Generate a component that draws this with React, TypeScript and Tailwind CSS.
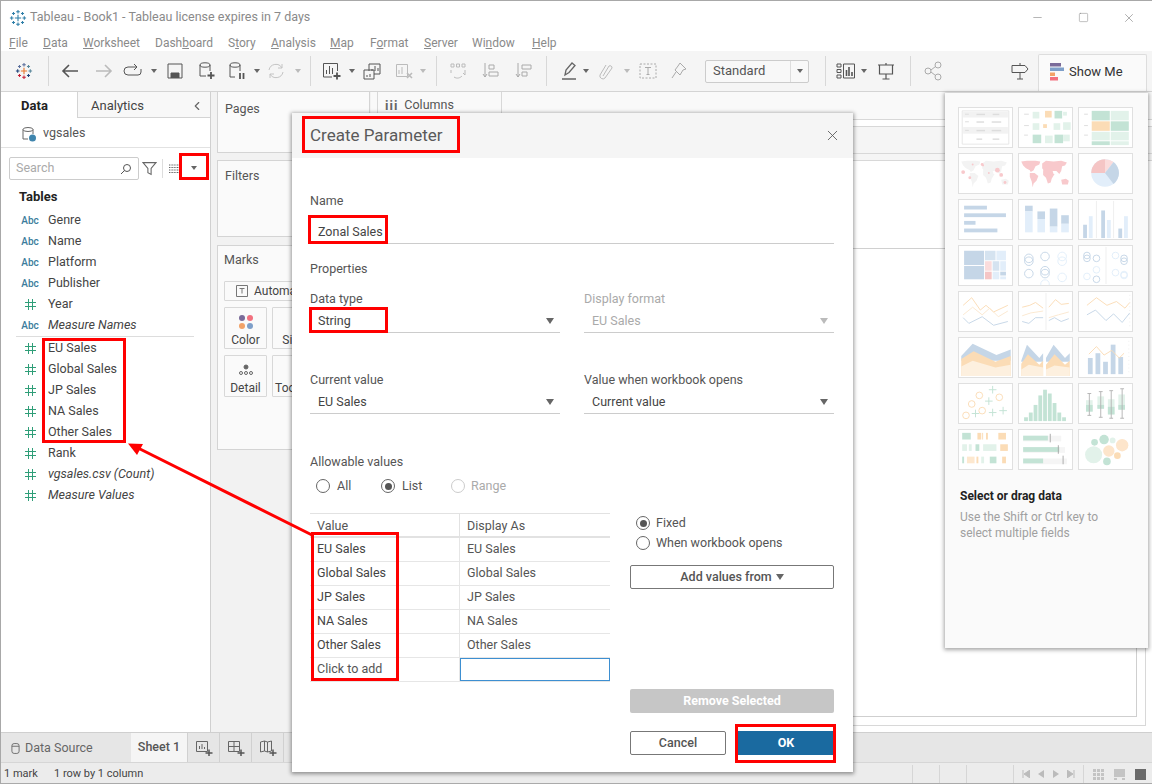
import type { ReactNode } from 'react';
import { X, Minus, Square, ChevronLeft } from 'lucide-react';

const B = '#c5d6e7';
const LB = '#e2eefa';
const O = '#fbdcb6';
const G = '#c3e3d5';
const LG = '#e2f2ea';
const P = '#f8c9cc';

function Ic({ children, className = '' }: { children: ReactNode; className?: string }) {
  return (
    <svg viewBox="0 0 20 20" fill="none" stroke="currentColor" className={`h-5 w-5 shrink-0 ${className}`}>
      {children}
    </svg>
  );
}

function Caret({ className = '' }: { className?: string }) {
  return <span className={`h-0 w-0 shrink-0 border-x-[3px] border-t-[4px] border-x-transparent border-t-[#666] ${className}`} />;
}

function GrayCaret({ className = '' }: { className?: string }) {
  return <span className={`h-0 w-0 shrink-0 border-x-[3px] border-t-[4px] border-x-transparent border-t-[#bbb] ${className}`} />;
}

function BigCaret({ disabled }: { disabled?: boolean }) {
  return <span className={`h-0 w-0 shrink-0 border-x-[4px] border-t-[6px] border-x-transparent ${disabled ? 'border-t-[#bbb]' : 'border-t-[#666]'}`} />;
}

function Sep({ className = '' }: { className?: string }) {
  return <span className={`h-[30px] w-px shrink-0 bg-[#d8d8d8] ${className}`} />;
}

function Logo({ mono = false }: { mono?: boolean }) {
  const c = mono ? ['#2f7fa8', '#2f7fa8', '#2f7fa8', '#2f7fa8', '#2f7fa8'] : ['#e8762b', '#5b6f9c', '#c72037', '#1f447a', '#59879b'];
  const plus = (x: number, y: number, r: number, col: string, k: string) => (
    <path key={k} d={`M${x - r} ${y}H${x + r}M${x} ${y - r}V${y + r}`} stroke={col} strokeWidth="1.2" />
  );
  return (
    <svg viewBox="0 0 20 20" className="h-[18px] w-[18px]" fill="none">
      {plus(10, 10, 3.5, c[0], 'a')}
      {plus(10, 3, 2, c[1], 'b')}
      {plus(10, 17, 2, c[2], 'c')}
      {plus(3, 10, 2, c[3], 'd')}
      {plus(17, 10, 2, c[4], 'e')}
      {plus(5, 5, 1.7, c[1], 'f')}
      {plus(15, 5, 1.7, c[4], 'g')}
      {plus(5, 15, 1.7, c[2], 'h')}
      {plus(15, 15, 1.7, c[3], 'i')}
    </svg>
  );
}

function Toolbar() {
  return (
    <div className="flex h-[41px] shrink-0 items-center border-b border-[#d4d4d4] bg-[#f5f5f5]">
      <div className="ml-[14px] flex w-5 justify-center"><Logo /></div>
      <Sep className="ml-[14px]" />
      <Ic className="ml-[11px] text-[#555]"><path d="M18 10H3M9 4l-6 6 6 6" strokeWidth="1.6" /></Ic>
      <Ic className="ml-[14px] text-[#bbb]"><path d="M2 10h15M11 4l6 6-6 6" strokeWidth="1.6" /></Ic>
      <Ic className="ml-[9px] text-[#555]"><path d="M13 6H5a3 3 0 0 0 0 8h10a3 3 0 0 0 3-3V8M11 3l3 3-3 3" /></Ic>
      <Caret className="ml-2" />
      <Ic className="ml-2 text-[#555]"><path d="M3 3h14v14H3z" /><path d="M6 17v-5h8v5" fill="currentColor" /></Ic>
      <Ic className="ml-[11px] text-[#555]"><ellipse cx="9" cy="4" rx="5" ry="2.2" /><path d="M4 4v11h6M14 4v6" /><path d="M15 11v7M11.5 14.5h7" strokeWidth="1.8" /></Ic>
      <Ic className="ml-[11px] text-[#555]"><ellipse cx="8" cy="4" rx="5" ry="2.2" /><path d="M3 4v12h5M13 4v6" /><path d="M13 12v6M16.5 12v6" strokeWidth="1.8" /></Ic>
      <Caret className="ml-[7px]" />
      <Ic className="ml-1.5 text-[#c4c4c4]"><path d="M3 9a7 7 0 0 1 13-2M17 11a7 7 0 0 1-13 2M16 3v4h-4M4 17v-4h4" /></Ic>
      <GrayCaret className="ml-[9px]" />
      <Sep className="ml-[9px]" />
      <Ic className="ml-[11px] text-[#555]"><path d="M10 16H1.500V2.500h14V10M4.500 13V9M7.500 13V5M10.500 13V7" /><path d="M15 11.500v7M11.500 15h7" strokeWidth="1.8" /></Ic>
      <Caret className="ml-[7px]" />
      <Ic className="ml-[7px] text-[#555]"><path d="M7 10V3h11v10h-6M10 10V8M13 10V5M16 10V7" /><path d="M2 9h10v9H2zM5 16v-2M8 16v-3" /></Ic>
      <Ic className="ml-3 text-[#bbb]"><path d="M2.500 3.500h11v12h-11zM5 13V9M8 13V6" /><path d="M13 12l5 5M18 12l-5 5" strokeWidth="1.6" /></Ic>
      <GrayCaret className="ml-1.5" />
      <Sep className="ml-2.5" />
      <Ic className="ml-[11px] text-[#bbb]"><path d="M3 3h3v3H3zM8.500 3h3v3h-3zM14 3h3v3h-3zM3 9v3M17 9v5l-2-2M6 16c3 2 6 1 8-1" /></Ic>
      <Ic className="ml-3 text-[#aaa]"><path d="M5 2v14M3 13l2 3 2-3" /><path d="M9 4h5v4H9zM9 11h9v4H9z" /></Ic>
      <Ic className="ml-[13px] text-[#aaa]"><path d="M5 2v14M3 13l2 3 2-3" /><path d="M9 4h9v4H9zM9 11h5v4H9z" /></Ic>
      <Sep className="ml-[13px]" />
      <Ic className="ml-3 text-[#666]"><path d="M6 14l1-5 6-7 3 2.500-6 7zM3 18h14" strokeWidth="1.3" /></Ic>
      <Caret className="ml-1" />
      <Ic className="ml-[7px] text-[#bbb]"><path d="M7 15l6-10a2 2 0 0 1 3 2L9 17a3 3 0 0 1-5-3l6-10" /></Ic>
      <GrayCaret className="ml-2" />
      <Ic className="ml-2 text-[#aaa]"><path d="M2 3h16v14H2z" strokeDasharray="2 1.500" /><path d="M7 6.500h6M10 6.500v7M8.500 13.500h3" /></Ic>
      <Ic className="ml-[11px] text-[#aaa]"><path d="M11 2l6 6-3 1-3 5-1-1-4-4 3-4zM7 11l-4 6" /></Ic>
      <div className="ml-4 flex h-[23px] w-[104px] shrink-0 items-center rounded-[2px] border border-[#ccc] bg-[#f8f8f8]">
        <span className="flex-1 pl-[7px] text-[13px] text-[#555]">Standard</span>
        <span className="flex h-full w-[18px] items-center justify-center border-l border-[#ddd]"><Caret /></span>
      </div>
      <Sep className="ml-4" />
      <Ic className="ml-2.5 text-[#555]"><path d="M1 3h4v3H1zM1 8.500h4v3H1zM1 14h4v3H1zM7.500 3h11v14h-11z" /><path d="M10.500 15V9M13 15V6M16 15v-4" strokeWidth="1.6" /></Ic>
      <Caret className="ml-[5px]" />
      <Ic className="ml-[9px] text-[#555]"><path d="M2 4h16M3.500 4v9h13V4M10 2v2M10 13v5M6.500 18h7" strokeWidth="1.2" /></Ic>
      <Sep className="ml-3.5" />
      <Ic className="ml-3 text-[#aaa]"><circle cx="5" cy="10" r="3" /><circle cx="15" cy="4" r="3" /><circle cx="15" cy="16" r="3" /><path d="M8 9l4.500-3.500M8 11l4.500 3.500" /></Ic>
      <Ic className="ml-[67px] text-[#555]"><path d="M2 4.500h13l3 3.500-3 3.500H2zM10 2v2.500M10 11.500V18M7 18h6" /></Ic>
      <div className="ml-2 flex h-[37px] w-[109px] shrink-0 items-center self-end rounded-t-[2px] border-x border-t border-[#ddd] bg-[#fafafa] pb-[3px] pl-[11px]">
        <svg viewBox="0 0 14 18" className="h-[18px] w-[14px]">
          <rect x="0" y="0" width="11" height="3.500" fill="#7a6b99" />
          <rect x="0" y="4.500" width="14" height="3.500" fill="#7e9fc9" />
          <rect x="0" y="9.500" width="5" height="3.500" fill="#f2a268" />
          <rect x="0" y="14" width="8" height="3.500" fill="#f2717f" />
        </svg>
        <span className="ml-[5px] text-[13px] text-[#333]">Show Me</span>
      </div>
    </div>
  );
}

const DATA_FIELDS = [
  { k: 'a', n: 'Genre' },
  { k: 'a', n: 'Name' },
  { k: 'a', n: 'Platform' },
  { k: 'a', n: 'Publisher' },
  { k: 'n', n: 'Year' },
  { k: 'a', n: 'Measure Names', i: true },
];

const MEASURE_FIELDS = [
  { k: 'n', n: 'EU Sales' },
  { k: 'n', n: 'Global Sales' },
  { k: 'n', n: 'JP Sales' },
  { k: 'n', n: 'NA Sales' },
  { k: 'n', n: 'Other Sales' },
  { k: 'n', n: 'Rank' },
  { k: 'n', n: 'vgsales.csv (Count)', i: true },
  { k: 'n', n: 'Measure Values', i: true },
];

function Field({ k, n, i }: { k: string; n: string; i?: boolean }) {
  return (
    <div className="flex h-[21px] items-center">
      <span className="flex w-[48px] justify-center pl-[12px]">
        {k === 'a' ? (
          <span className="text-[10px] font-medium text-[#3b7c9c]">Abc</span>
        ) : (
          <svg viewBox="0 0 11 11" className="h-[11px] w-[11px]" fill="none" stroke="#2f9e78">
            <path d="M3.500 0v11M7.500 0v11M0 3.500h11M0 7.500h11" />
          </svg>
        )}
      </span>
      <span className={`text-[12.500px] text-[#444] ${i ? 'italic' : ''}`}>{n}</span>
    </div>
  );
}

function DataPane() {
  return (
    <div className="flex w-[211px] shrink-0 flex-col border-r border-[#d0d0d0] bg-white">
      <div className="flex h-[26px] shrink-0">
        <div className="flex w-[78px] items-center justify-center border-r border-[#d4d4d4] pt-0.5 pr-2 text-[13px] font-bold text-[#222]">Data</div>
        <div className="flex flex-1 items-center justify-between border-b border-[#d4d4d4] bg-[#f8f8f8] pt-0.5 pr-[6px] pl-[13px] text-[13px] text-[#444]">
          Analytics
          <ChevronLeft size={14} className="text-[#666]" />
        </div>
      </div>
      <div className="flex h-[30px] shrink-0 items-center border-b border-[#e2e2e2] pt-[2px] pl-[21px]">
        <svg viewBox="0 0 16 16" className="h-4 w-4" fill="none">
          <ellipse cx="7" cy="3.500" rx="5" ry="2" stroke="#666" />
          <path d="M2 3.500V13h5M12 3.500V8" stroke="#666" />
          <circle cx="11.500" cy="12" r="3.500" fill="#3f85ad" />
        </svg>
        <span className="ml-[6px] text-[12.500px] text-[#555]">vgsales</span>
      </div>
      <div className="flex h-[32px] shrink-0 items-end pl-[9px]">
        <div className="flex h-[23px] w-[130px] items-center justify-between rounded-[2px] border border-[#ccc] px-[6px]">
          <span className="text-[12.500px] text-[#aaa]">Search</span>
          <svg viewBox="0 0 12 12" className="h-3 w-3" fill="none" stroke="#555"><circle cx="7" cy="5" r="3.500" /><path d="M4.500 7.500L1 11" /></svg>
        </div>
        <svg viewBox="0 0 14 14" className="mb-1 ml-[3px] h-[15px] w-[15px]" fill="none" stroke="#666"><path d="M1 1.500h12L8.500 7v5.500l-3-1.500V7z" /></svg>
        <span className="mb-0.5 ml-[5px] h-[19px] w-px bg-[#ddd]" />
        <svg viewBox="0 0 11 9" className="mb-[7px] ml-[6px] h-[9px] w-[11px]" fill="none" stroke="#555" strokeWidth=".9" strokeDasharray="1 .6"><path d="M0 1h11M0 3.500h11M0 6h11M0 8.500h11" /></svg>
        <Caret className="mb-[10px] ml-[11px]" />
      </div>
      <div className="mt-[6px] flex h-[21px] shrink-0 items-center pl-[19px] text-[13px] font-bold text-[#222]">Tables</div>
      <div className="mt-[3px] flex flex-col">
        {DATA_FIELDS.map((f) => <Field key={f.n} {...f} />)}
      </div>
      <div className="mx-4 mb-[1px] h-px bg-[#ddd]" />
      <div className="flex flex-col">
        {MEASURE_FIELDS.map((f) => <Field key={f.n} {...f} />)}
      </div>
    </div>
  );
}

function MarkBtn({ label, children }: { label: string; children: ReactNode }) {
  return (
    <div className="flex h-[42px] w-[43px] shrink-0 flex-col items-center justify-end rounded-[1px] border border-[#d8d8d8] pb-px text-[12px] leading-[14px] text-[#444]">
      {children}
      {label}
    </div>
  );
}

function Shelves() {
  return (
    <div className="flex w-[160px] shrink-0 flex-col bg-[#f2f2f2] pr-px pb-[282px] pl-[6px]">
      <div className="h-[61px] rounded-b-[1px] border-x border-b border-[#d4d4d4] bg-[#fafafa] pt-2 pl-[7px] text-[12.500px] text-[#555]">Pages</div>
      <div className="mt-[7px] h-[77px] border border-[#d4d4d4] bg-[#fafafa] pt-[6px] pl-[7px] text-[12.500px] text-[#555]">Filters</div>
      <div className="mt-2 flex-1 border border-[#d4d4d4] bg-[#fafafa] px-[6px] pt-[5px]">
        <div className="text-[12.500px] text-[#555]">Marks</div>
        <div className="mt-[11px] flex h-5 items-center rounded-[1px] border border-[#d8d8d8] pl-[11px] text-[12px] text-[#444]">
          <svg viewBox="0 0 12 12" className="mr-[6px] h-3 w-3" fill="none" stroke="#777"><path d="M.5.500h11v11H.500zM3.500 3.500h5M6 3.500v5" /></svg>
          Automatic
        </div>
        <div className="mt-[6px] flex gap-[5px]">
          <MarkBtn label="Color">
            <svg viewBox="0 0 16 16" className="mb-[3px] h-4 w-4">
              <circle cx="4" cy="4" r="3" fill="#7a6b99" /><circle cx="12" cy="4" r="3" fill="#f2717f" />
              <circle cx="4" cy="12" r="3" fill="#f2a268" /><circle cx="12" cy="12" r="3" fill="#7e9fc9" />
            </svg>
          </MarkBtn>
          <MarkBtn label="Size"><span className="h-3.5" /></MarkBtn>
        </div>
        <div className="mt-[6px] flex gap-[5px]">
          <MarkBtn label="Detail">
            <svg viewBox="0 0 16 12" className="mb-[5px] h-3 w-4" fill="none" stroke="#666">
              <circle cx="8" cy="3" r="2" fill="#666" /><circle cx="3" cy="9" r="1.500" /><circle cx="8" cy="9" r="1.500" /><circle cx="13" cy="9" r="1.500" />
            </svg>
          </MarkBtn>
          <MarkBtn label="Tooltip"><span className="h-3" /></MarkBtn>
        </div>
      </div>
    </div>
  );
}

function Canvas() {
  return (
    <div className="flex min-w-0 flex-1 flex-col bg-white">
      <div className="flex h-[28px] shrink-0 items-stretch border-b border-[#d8d8d8] bg-[#f9f9f9] pl-[6px]">
        <div className="flex w-[125px] items-center gap-1.5 border-x border-[#d8d8d8] pl-[7px] text-[12.500px] text-[#555]">
          <span className="text-[13px] font-bold tracking-[1px] text-[#666]">iii</span>
          Columns
        </div>
      </div>
      <div className="h-[7px] shrink-0 border-b border-[#d8d8d8] bg-white" />
      <div className="h-[27px] shrink-0 border-b border-[#d8d8d8] bg-[#f5f5f5]" />
      <div className="h-[7px] shrink-0 border-b border-[#d8d8d8] bg-[#f5f5f5]" />
      <div className="flex flex-1 flex-col pr-[6px] pb-[6px]">
        <div className="flex flex-1 flex-col border-r border-b border-[#d8d8d8] pr-2 pb-2">
          <div className="flex-1 border-r border-b border-[#cfcfcf]">
            <div className="h-[88px] border-b border-[#d0d0d0]" />
          </div>
        </div>
      </div>
    </div>
  );
}

function MiniIcon({ kind }: { kind: 'sheet' | 'dash' | 'story' }) {
  return (
    <span className="flex h-full w-[32px] items-center justify-center border-r border-[#d0d0d0]">
      <svg viewBox="0 0 18 18" className="h-[18px] w-[18px]" fill="none" stroke="#666">
        {kind === 'sheet' && <path d="M1.500 2.500h11v10h-11zM4.500 10V7M7 10V5M9.500 10V8" />}
        {kind === 'dash' && <path d="M1.500 2.500h11v10h-11zM7 2.500v10M1.500 7.500h11" />}
        {kind === 'story' && <path d="M1.500 3l4-1 3 1 4-1v10l-4 1-3-1-4 1zM5.500 2v10M8.500 3v10" />}
        <path d="M14 10.500v6.500M10.500 14h7" strokeWidth="1.500" stroke="#555" />
      </svg>
    </span>
  );
}

function TabBar() {
  return (
    <div className="flex h-[30px] shrink-0 items-stretch border-t border-[#cfcfcf] bg-[#e6e6e6]">
      <div className="flex w-[131px] items-center pt-px pl-[11px] text-[12.500px] text-[#666]">
        <svg viewBox="0 0 10 13" className="mr-[5px] h-[13px] w-[9px]" fill="none" stroke="#666"><rect x="1" y="1" width="8" height="11" rx="2.500" /><path d="M1 4h8" /></svg>
        Data Source
      </div>
      <div className="flex w-[56px] items-center justify-center bg-[#f5f5f5] text-[12.500px] font-medium text-[#555]">Sheet 1</div>
      <span className="w-px bg-[#d0d0d0]" />
      <MiniIcon kind="sheet" />
      <MiniIcon kind="dash" />
      <MiniIcon kind="story" />
    </div>
  );
}

function StatusBar() {
  return (
    <div className="flex h-[22px] shrink-0 items-center border-t border-b border-t-[#d6d6d6] border-b-[#aaa] bg-[#ececec] pt-[2px] text-[11px] text-[#444]">
      <span className="w-[54px] pl-1">1 mark</span>
      <span className="w-[858px]">1 row by 1 column</span>
      <span className="h-full w-[27px] border-l border-[#d6d6d6]" />
      <span className="h-full w-[27px] border-l border-[#d6d6d6]" />
      <span className="h-full w-[47px] border-l border-[#d6d6d6]" />
      <div className="flex h-full w-[71px] items-center justify-around border-x border-[#d6d6d6] px-1 text-[#bbb]">
        <svg viewBox="0 0 8 8" className="h-2 w-2" fill="currentColor"><path d="M1 0v8M8 0v8L2 4z" stroke="currentColor" /></svg>
        <svg viewBox="0 0 8 8" className="h-2 w-2" fill="currentColor"><path d="M7 0v8L1 4z" /></svg>
        <svg viewBox="0 0 8 8" className="h-2 w-2" fill="currentColor"><path d="M1 0v8l6-4z" /></svg>
        <svg viewBox="0 0 8 8" className="h-2 w-2" fill="currentColor"><path d="M7 0v8M0 0v8l6-4z" stroke="currentColor" /></svg>
      </div>
      <div className="flex flex-1 items-center gap-[10px] pl-[9px]">
        <span className="grid h-[11px] w-[11px] grid-cols-3 gap-px">
          {Array.from({ length: 9 }, (_, i) => <span key={i} className="bg-[#c4c4c4]" />)}
        </span>
        <span className="flex h-[11px] w-[11px] flex-col gap-px">
          <span className="flex-1 bg-[#c4c4c4]" />
          <span className="h-[2px] border-x-[3px] border-[#c4c4c4] bg-transparent" />
        </span>
        <span className="h-[11px] w-[11px] bg-[#6a6a6a]" />
      </div>
    </div>
  );
}

function Thumb({ children }: { children: ReactNode }) {
  return (
    <svg viewBox="0 0 55 41" className="h-[41px] w-[55px] border border-[#e0e0e0] bg-white" fill="none">
      {children}
    </svg>
  );
}

function Rects({ items }: { items: [number, number, number, number, string][] }) {
  return <>{items.map(([x, y, w, h, f], i) => <rect key={i} x={x} y={y} width={w} height={h} fill={f} />)}</>;
}

function Circles({ items, color }: { items: [number, number, number][]; color: string }) {
  return <>{items.map(([x, y, r], i) => <circle key={i} cx={x} cy={y} r={r} stroke={color} />)}</>;
}

function Plus({ x, y }: { x: number; y: number }) {
  return <path d={`M${x - 4} ${y}h8M${x} ${y - 4}v8`} stroke={G} />;
}

const CONTINENTS =
  'M2 8l6-1 9 0 5 1-1 3-4 2-2 4-3 2-1-2-4-2-3-3zM11 20l5 0 4 3-2 5-3 3-1 4-1-6-2-5zM24 10l4-3 8 1 8-1 6 2-2 3-3 1-1 5-2 3-3-3-4 0-1 3-3-3-5 0-2-3zM25 17l5-1 5 2 1 3 1 0-3 5-1 4-3 1-2-6-3-3zM44 27l5-1 3 2-1 4-6 0z';

const THUMBS: ReactNode[] = [
  <Thumb key="text"><path d="M3 3h49v35H3z" stroke="#e6e6e6" /><Rects items={[[4, 4, 47, 6, '#f2f2f2'], [4, 20, 47, 7, '#f2f2f2'], [6, 6, 4, 1, '#ddd'], [6, 14, 4, 1, '#ddd'], [6, 23, 4, 1, '#ddd'], [18, 6, 9, 1.500, '#ddd'], [35, 6, 7, 1.500, '#ddd'], [18, 14, 8, 1.500, '#ddd'], [34, 14, 10, 1.500, '#ddd'], [18, 23, 9, 1.500, '#ddd'], [34, 23, 10, 1.500, '#ddd'], [18, 32, 6, 1.500, '#ddd'], [35, 32, 7, 1.500, '#ddd']]} /></Thumb>,
  <Thumb key="heat"><Rects items={[[5, 6, 5, 1, '#ddd'], [5, 18, 5, 1, '#ddd'], [5, 28, 4, 1, '#ddd'], [14, 4, 7, 7, LG], [27, 3, 7, 7, O], [37, 3, 8, 8, G], [46, 4, 4, 4, LG], [14, 16, 7, 7, LG], [25, 17, 4, 4, O], [36, 16, 7, 7, LG], [46, 15, 8, 8, LG], [14, 28, 9, 9, G], [27, 29, 8, 8, LG], [37, 28, 9, 9, G], [46, 28, 7, 7, LG]]} /></Thumb>,
  <Thumb key="high"><Rects items={[[5, 6, 4, 1, '#ddd'], [5, 18, 4, 1, '#ddd'], [5, 28, 4, 1, '#ddd'], [13, 3, 19, 10, G], [33, 3, 19, 10, LG], [13, 14, 19, 10, O], [33, 14, 19, 10, G], [13, 25, 19, 9, LG], [33, 25, 19, 9, LG], [13, 35, 19, 4, G], [33, 35, 19, 4, LG]]} /></Thumb>,
  <Thumb key="sym"><path d={CONTINENTS} fill="#f3f3f3" /><g fill={P}><circle cx="4" cy="19" r="2" /><circle cx="11" cy="25" r="1.500" /><circle cx="24" cy="11" r="1.500" /><circle cx="25" cy="12" r="1" /><circle cx="40" cy="17" r="2.500" /><circle cx="44" cy="22" r="2" /><circle cx="48" cy="30" r="1.500" /><circle cx="31" cy="20" r="1" /><circle cx="14" cy="11" r="1" /></g></Thumb>,
  <Thumb key="fill"><path d={CONTINENTS} fill={P} /></Thumb>,
  <Thumb key="pie"><circle cx="27" cy="20" r="14.500" fill={LB} /><path d="M27 20V5.500A14.500 14.500 0 0 0 12.500 20z" fill="#f5c5c5" /><path d="M27 20V5.500a14.500 14.500 0 0 1 9 3z" fill="#fbdcdc" /><path d="M27 20l9-11.500a14.500 14.500 0 0 1 0 23z" fill={B} /></Thumb>,
  <Thumb key="hbar"><Rects items={[[5, 6, 24, 4, B], [5, 14, 44, 4, B], [5, 22, 12, 4, B], [5, 30, 35, 4, B]]} /></Thumb>,
  <Thumb key="stack"><Rects items={[[6, 6, 8, 6, B], [6, 12, 8, 22, LB], [19, 12, 8, 8, B], [19, 20, 8, 14, LB], [32, 9, 8, 19, B], [32, 28, 8, 6, LB], [44, 16, 8, 9, B], [44, 25, 8, 9, LB]]} /></Thumb>,
  <Thumb key="side"><path d="M18 1v39M36 1v39" stroke="#eee" /><Rects items={[[4, 26, 4, 14, B], [10, 17, 4, 23, LB], [23, 11, 4, 29, B], [29, 21, 4, 19, LB], [41, 30, 4, 10, B], [47, 17, 4, 23, LB]]} /></Thumb>,
  <Thumb key="tree"><Rects items={[[5, 5, 21, 15, B], [5, 21, 21, 14, B], [27, 5, 11, 10, '#d5e3f0'], [39, 5, 10, 10, LB], [27, 16, 7, 10, '#fbdcdc'], [35, 16, 7, 10, '#d5e3f0'], [43, 16, 6, 10, LB], [27, 27, 7, 8, '#f5c5c5'], [35, 27, 7, 8, LB], [43, 27, 6, 4, B], [43, 32, 6, 3, LB]]} /></Thumb>,
  <Thumb key="circ"><Circles color={B} items={[[10, 13, 4.500], [10, 16, 4.500], [27, 11, 4.500], [10, 29, 4.500], [27, 26, 4.500], [27, 29, 4.500]]} /><Circles color={LB} items={[[45, 11, 4.500], [45, 16, 4.500], [45, 33, 4.500], [27, 40, 4.500]]} /></Thumb>,
  <Thumb key="circ2"><path d="M28 1v39" stroke="#eee" /><Circles color={B} items={[[8, 10, 3.500], [8, 13, 3.500], [18, 13, 3.500], [18, 35, 3.500]]} /><Circles color={LB} items={[[18, 25, 3.500], [8, 32, 3.500], [38, 10, 3.500], [38, 28, 3.500], [47, 30, 3.500], [47, 31, 3.500]]} /><Circles color={B} items={[[47, 13, 3.500], [47, 16, 3.500]]} /></Thumb>,
  <Thumb key="line"><path d="M4 14l9-8 9 13 6-5 8 7 15-7" stroke={O} /><path d="M4 24l10-8 10 8 8-7 9 9 10-6" stroke="#fbe8d0" /><path d="M4 27l6 6 14-7 12 9 15-4" stroke={B} /></Thumb>,
  <Thumb key="line2"><path d="M28 1v39" stroke="#eee" /><path d="M3 16l8-2 6-3 8 6M31 16l7-8 6 5 8-1" stroke={O} /><path d="M3 25l9-3 13-2M31 27l10-3 11-3" stroke="#fbe8d0" /><path d="M3 31l7 2 7-6 8 0M31 30l6-3 7 4 8-3" stroke={B} /></Thumb>,
  <Thumb key="line3"><path d="M8 14l10-8 11 8 10-4 9 7 5-6" stroke={O} /><path d="M8 24l9-5 11 11 8-7 9 9 8-10" stroke={B} /><path d="M53 3v34" stroke="#eee" strokeDasharray="1 3" /></Thumb>,
  <Thumb key="area"><path d="M2 19L14 6l25 12 15-6v12H2z" fill={B} /><path d="M2 22L15 14l23 11 16-6v21H2z" fill={O} /><path d="M2 30l12-6 24 7 16-3v12H2z" fill="#fdf0df" /></Thumb>,
  <Thumb key="area2"><path d="M2 24l6-17 13 14 4-5v9H2zM28 21l8-14 12 14 5-5v9H28z" fill={B} /><path d="M2 27l7-10 12 11 4-4v16H2zM28 28l9-11 11 11 5-4v16H28z" fill={O} /><path d="M2 33l8-5 15 3v9H2zM28 33l9-4 16 2v9H28z" fill="#fdf0df" /></Thumb>,
  <Thumb key="combo"><Rects items={[[9, 21, 5, 17, B], [17, 16, 5, 22, B], [25, 25, 5, 13, B], [33, 7, 5, 31, B], [41, 20, 5, 18, B]]} /><path d="M10 17l8-8 8 9 8-5 8 8 5-5" stroke={O} /><path d="M52 3v34" stroke="#eee" strokeDasharray="1 3" /></Thumb>,
  <Thumb key="scatter"><Circles color={O} items={[[7, 33, 3.500], [13, 21, 3.500], [21, 12, 3.500], [24, 28, 3.500], [42, 14, 3.500]]} /><Plus x={17} y={31} /><Plus x={35} y={6} /><Plus x={31} y={18} /><Plus x={46} y={28} /><Plus x={35} y={30} /></Thumb>,
  <Thumb key="hist"><Rects items={[[5, 35, 4, 4, G], [10, 30, 4, 9, G], [15, 22, 4, 17, G], [20, 12, 4, 27, G], [25, 6, 4, 33, G], [30, 10, 4, 29, G], [35, 20, 4, 19, G], [40, 30, 4, 9, G], [45, 35, 4, 4, G]]} /></Thumb>,
  <Thumb key="box"><Rects items={[[7, 17, 7, 12, LG], [7, 22, 7, 7, G], [19, 13, 7, 13, LG], [19, 22, 7, 4, G], [30, 16, 7, 16, LG], [30, 24, 7, 8, G], [41, 11, 7, 16, LG], [41, 22, 7, 5, G]]} /><path d="M8.500 10h4M10.500 10v23M8.500 33h4M20.500 8h4M22.500 8v27M20.500 35h4M31.500 7h4M33.500 7v29M31.500 36h4M43 5h4M45 5v31M43 36h4" stroke="#b5b5b5" /></Thumb>,
  <Thumb key="gantt"><Rects items={[[3, 3, 9, 7, G], [19, 3, 4, 7, O], [24, 3, 1, 7, O], [28, 3, 2, 7, O], [41, 3, 8, 7, O], [3, 15, 5, 7, LG], [10, 15, 3, 7, LG], [17, 15, 4, 7, G], [25, 15, 14, 7, LG], [43, 15, 8, 7, O], [3, 28, 2, 7, G], [8, 28, 8, 7, '#fde8cf'], [18, 28, 2, 7, O], [23, 28, 3, 7, LG], [32, 28, 7, 7, G], [45, 28, 4, 7, O]]} /></Thumb>,
  <Thumb key="bullet"><Rects items={[[4, 6, 40, 6, '#f5f5f5'], [4, 6, 26, 5, G], [4, 18, 44, 6, '#f5f5f5'], [4, 18, 38, 5, G], [4, 30, 46, 6, '#f5f5f5'], [4, 30, 21, 5, G]]} /><path d="M32.500 4v9M41 16v9M46 27v9" stroke="#aaa" /></Thumb>,
  <Thumb key="bubble"><g fill={LG}><circle cx="15" cy="26" r="9" /></g><circle cx="16" cy="13" r="3.500" fill={G} /><circle cx="26" cy="10" r="5" fill={G} /><circle cx="35" cy="11" r="3" fill={LG} /><circle cx="45" cy="16" r="6.500" fill="#fde5cb" /><circle cx="31" cy="22" r="6" fill="#fde5cb" /><circle cx="40" cy="27" r="3.500" fill={O} /><circle cx="29" cy="33" r="4" fill={G} /></Thumb>,
];

function ShowMe() {
  return (
    <div className="absolute top-[93px] left-[945px] flex h-[555px] w-[203px] flex-col bg-[#fafafa] px-[13px] pt-[14px] shadow-[0_1px_4px_1px_rgba(0,0,0,0.35)]">
      <div className="grid grid-cols-[55px_55px_55px] gap-[5px]">{THUMBS}</div>
      <div className="mt-[17px] pl-0.5 text-[12px] font-bold text-[#222]">Select or drag data</div>
      <div className="mt-[4px] pl-0.5 text-[12px] leading-[16px] text-[#a0a0a0]">
        Use the Shift or Ctrl key to<br />select multiple fields
      </div>
    </div>
  );
}

function Radio({ on, off }: { on?: boolean; off?: boolean }) {
  return (
    <span className={`flex h-[14px] w-[14px] shrink-0 items-center justify-center rounded-full border ${off ? 'border-[#ccc]' : 'border-[#666]'}`}>
      {on && <span className="h-[7px] w-[7px] rounded-full bg-[#555]" />}
    </span>
  );
}

function Select({ value, disabled }: { value: string; disabled?: boolean }) {
  return (
    <div className={`mt-0.5 flex h-[25px] items-center justify-between border-b border-[#ccc] pt-[2px] pr-[6px] pl-2 ${disabled ? 'text-[#aaa]' : 'text-[#444]'}`}>
      {value}
      <BigCaret disabled={disabled} />
    </div>
  );
}

const LIST_ROWS = ['EU Sales', 'Global Sales', 'JP Sales', 'NA Sales', 'Other Sales'];

function Dialog() {
  return (
    <div className="absolute top-[113px] left-[292px] flex h-[659px] w-[561px] flex-col bg-white text-[12.500px] text-[#555] shadow-[0_1px_4px_1px_rgba(0,0,0,0.4)]">
      <div className="flex h-[45px] shrink-0 items-center justify-between bg-[#f5f5f5] pr-[12px] pl-[18px]">
        <span className="text-[17px] text-[#5a5a5a]">Create Parameter</span>
        <X size={17} strokeWidth={1.2} className="text-[#555]" />
      </div>
      <div className="flex flex-col pr-[19px] pl-[18px]">
        <div className="mt-[34px] h-4 leading-[18px]">Name</div>
        <div className="mt-[11px] flex h-[25px] items-center border-b border-[#ccc] pt-[2px] pl-2 text-[#444]">Zonal Sales</div>
        <div className="mt-4 h-4 leading-[18px]">Properties</div>
        <div className="mt-[14px] grid grid-cols-[250px_250px] gap-x-6">
          <div>
            <div className="h-4 leading-[18px]">Data type</div>
            <Select value="String" />
          </div>
          <div>
            <div className="h-4 leading-[18px] text-[#aaa]">Display format</div>
            <Select value="EU Sales" disabled />
          </div>
          <div className="mt-[38px]">
            <div className="h-4 leading-[18px]">Current value</div>
            <Select value="EU Sales" />
          </div>
          <div className="mt-[38px]">
            <div className="h-4 leading-[18px]">Value when workbook opens</div>
            <Select value="Current value" />
          </div>
        </div>
        <div className="mt-[39px] h-4 leading-[18px]">Allowable values</div>
        <div className="mt-[7px] flex h-[18px] items-center pt-[2px] pl-[6px]">
          <Radio /><span className="ml-[7px] w-[44px]">All</span>
          <Radio on /><span className="ml-[7px] w-[49px]">List</span>
          <Radio off /><span className="ml-[6px] text-[#aaa]">Range</span>
        </div>
        <div className="mt-[19px] flex">
          <div className="w-[300px] shrink-0 border-t border-[#e2e2e2]">
            <div className="grid h-[24px] grid-cols-[150px_150px] border-b-2 border-[#e2e2e2]">
              <span className="flex items-center border-r border-[#e2e2e2] pt-0.5 pl-[7px]">Value</span>
              <span className="flex items-center pt-0.5 pl-[7px]">Display As</span>
            </div>
            {LIST_ROWS.map((r) => (
              <div key={r} className="grid h-[24px] grid-cols-[150px_150px] border-b border-[#e6e6e6]">
                <span className="flex items-center border-r border-[#e6e6e6] pl-[7px] text-[#444]">{r}</span>
                <span className="flex items-center pl-[7px]">{r}</span>
              </div>
            ))}
            <div className="grid h-[24px] grid-cols-[150px_150px] border-b border-[#e6e6e6]">
              <span className="flex items-center border-r border-[#e6e6e6] pl-[7px]">Click to add</span>
              <span className="border border-[#3d8fd1]" />
            </div>
          </div>
          <div className="ml-5 flex w-[204px] shrink-0 flex-col">
            <div className="flex h-5 items-center pl-[6px]"><Radio on /><span className="ml-[6px]">Fixed</span></div>
            <div className="flex h-5 items-center pl-[6px]"><Radio /><span className="ml-[6px]">When workbook opens</span></div>
            <div className="mt-3 flex h-6 items-center justify-center gap-1 rounded-[2px] border border-[#777] font-medium text-[#555]">
              Add values from <BigCaret />
            </div>
            <div className="mt-[100px] flex h-6 items-center justify-center rounded-[2px] bg-[#c6c6c6] font-bold text-white">Remove Selected</div>
            <div className="mt-[18px] flex justify-between">
              <div className="flex h-6 w-[96px] items-center justify-center rounded-[2px] border border-[#777] font-medium text-[#555]">Cancel</div>
              <div className="flex h-6 w-[96px] items-center justify-center bg-[#1a6aa0] font-bold text-white">OK</div>
            </div>
          </div>
        </div>
      </div>
    </div>
  );
}

function Mark({ className }: { className: string }) {
  return <div className={`absolute border-[3px] border-[#f00] ${className}`} />;
}

function Annotations() {
  return (
    <>
      <Mark className="top-[116px] left-[302px] h-[37px] w-[158px]" />
      <Mark className="top-[153px] left-[179px] h-[27px] w-[30px]" />
      <Mark className="top-[215px] left-[308px] h-[29px] w-[80px]" />
      <Mark className="top-[307px] left-[309px] h-[26px] w-[79px]" />
      <Mark className="top-[338px] left-[42px] h-[105px] w-[84px]" />
      <Mark className="top-[532px] left-[311px] h-[149px] w-[88px]" />
      <Mark className="top-[724px] left-[735px] h-[39px] w-[101px]" />
      <svg viewBox="0 0 200 110" className="absolute top-[435px] left-[120px] h-[110px] w-[200px]" fill="none">
        <path d="M192 100L16 12" stroke="#f00" strokeWidth="3" />
        <path d="M8 8.500L23 9 17 20z" fill="#f00" />
      </svg>
    </>
  );
}

export default function App() {
  return (
    <div className="relative flex h-[784px] w-[1152px] flex-col overflow-hidden bg-white [font-family:Roboto,sans-serif]">
      <div className="flex h-[34px] shrink-0 items-center pt-px">
        <span className="ml-[9px] flex h-[18px] w-[18px] items-center justify-center"><Logo mono /></span>
        <span className="ml-[3px] text-[12.500px] text-[#8a8a8a]">Tableau - Book1 - Tableau license expires in 7 days</span>
        <div className="ml-auto flex items-center text-[#777]">
          <span className="flex w-[46px] justify-center"><Minus size={13} strokeWidth={1} /></span>
          <span className="flex w-[46px] justify-center"><Square size={11} strokeWidth={1} /></span>
          <span className="flex w-[46px] justify-center"><X size={14} strokeWidth={1} /></span>
        </div>
      </div>
      <div className="flex h-[17px] shrink-0 items-center pl-[9px] text-[12px] text-[#8a8a8a]">
        <span className="w-[34px]"><u>F</u>ile</span>
        <span className="w-[40px]"><u>D</u>ata</span>
        <span className="w-[72px]"><u>W</u>orksheet</span>
        <span className="w-[73px]">Dash<u>b</u>oard</span>
        <span className="w-[43px]">S<u>t</u>ory</span>
        <span className="w-[59px]"><u>A</u>nalysis</span>
        <span className="w-[40px]"><u>M</u>ap</span>
        <span className="w-[54px]">F<u>o</u>rmat</span>
        <span className="w-[48px]"><u>S</u>erver</span>
        <span className="w-[60px]">Wi<u>n</u>dow</span>
        <span><u>H</u>elp</span>
      </div>
      <Toolbar />
      <div className="flex min-h-0 flex-1">
        <DataPane />
        <Shelves />
        <Canvas />
      </div>
      <TabBar />
      <StatusBar />
      <ShowMe />
      <Dialog />
      <Annotations />
      <div className="pointer-events-none absolute inset-0 border-t border-l border-[#a8a8a8]" />
    </div>
  );
}
